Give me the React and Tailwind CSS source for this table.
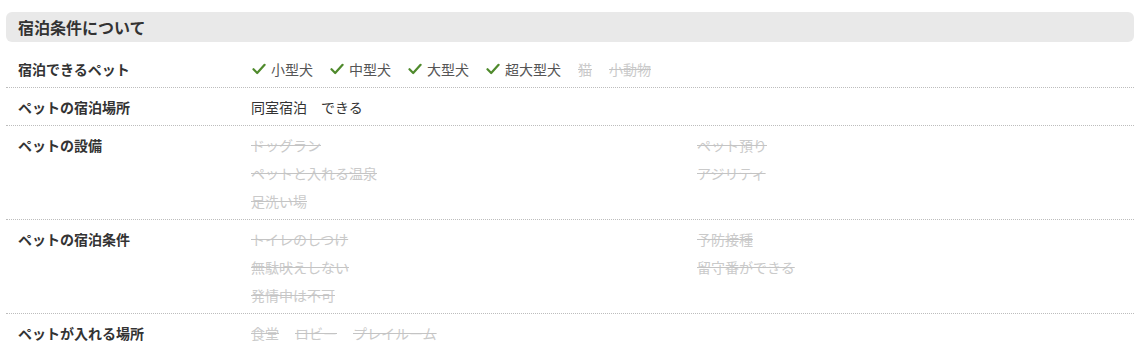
const PETS = [
  { name: "小型犬", ok: true },
  { name: "中型犬", ok: true },
  { name: "大型犬", ok: true },
  { name: "超大型犬", ok: true },
  { name: "猫", ok: false },
  { name: "小動物", ok: false },
];

function Check() {
  return (
    <svg className="w-[14px] h-[14px] mr-[5px] shrink-0" viewBox="0 0 14 14" fill="none">
      <path d="M1.5 7.2 L5.2 11 L12.6 2.8" stroke="#4f8a2c" strokeWidth="2.2" strokeLinecap="round" strokeLinejoin="round" />
    </svg>
  );
}

function Off({ children }) {
  return <span className="text-[#cacaca] line-through decoration-[#c4c4c4]">{children}</span>;
}

function Row({ label, children }) {
  return (
    <div className="flex pl-3 pt-[9px] pb-[8px] border-b border-dotted border-[#bdbdbd] last:border-b-0">
      <div className="w-[233px] shrink-0 font-bold text-[#333] leading-5">{label}</div>
      <div className="flex-1 leading-5">{children}</div>
    </div>
  );
}

function TwoCol({ left, right }) {
  return (
    <div className="grid grid-cols-[446px_1fr]">
      <div className="flex flex-col gap-2">
        {left.map((t) => <Off key={t}>{t}</Off>)}
      </div>
      <div className="flex flex-col gap-2">
        {right.map((t) => <Off key={t}>{t}</Off>)}
      </div>
    </div>
  );
}

export default function App() {
  return (
    <div className="bg-white w-[1147px] h-[360px] px-[6px] pt-3 text-[14px] text-[#333]"
      style={{ fontFamily: '"Noto Sans CJK JP", "Noto Sans", sans-serif' }}>
      <div className="w-[1128px]">
        <div className="h-[30px] rounded-md bg-[#e9e9e9] pl-3 flex items-center">
          <h2 className="text-[16px] font-bold text-[#333]">宿泊条件について</h2>
        </div>

        <div className="mt-2">
          <Row label="宿泊できるペット">
            <div className="flex items-center pl-px">
              {PETS.map((p, i) => (
                <span key={p.name} className={"flex items-center " + (i > 0 ? "ml-[17px]" : "")}>
                  {p.ok ? (
                    <>
                      <Check />
                      <span className="text-[#555]">{p.name}</span>
                    </>
                  ) : (
                    <Off>{p.name}</Off>
                  )}
                </span>
              ))}
            </div>
          </Row>

          <Row label="ペットの宿泊場所">
            <span>同室宿泊</span>
            <span className="ml-[14px]">できる</span>
          </Row>

          <Row label="ペットの設備">
            <TwoCol left={["ドッグラン", "ペットと入れる温泉", "足洗い場"]} right={["ペット預り", "アジリティ"]} />
          </Row>

          <Row label="ペットの宿泊条件">
            <TwoCol left={["トイレのしつけ", "無駄吠えしない", "発情中は不可"]} right={["予防接種", "留守番ができる"]} />
          </Row>

          <Row label="ペットが入れる場所">
            <div className="flex gap-4">
              <Off>食堂</Off>
              <Off>ロビー</Off>
              <Off>プレイルーム</Off>
            </div>
          </Row>
        </div>
      </div>
    </div>
  );
}
